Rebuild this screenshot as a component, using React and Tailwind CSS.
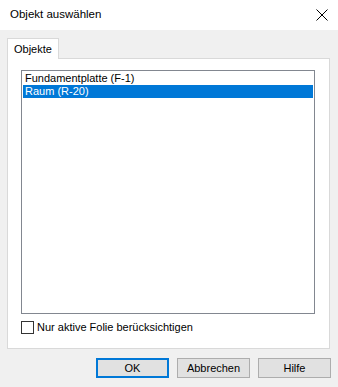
export default function App() {
  const items = [
    { id: 1, label: 'Fundamentplatte (F-1)', selected: false },
    { id: 2, label: 'Raum (R-20)', selected: true },
  ]

  return (
    <div className="w-[338px] h-[387px] flex flex-col bg-[#f0f0f0] text-[11px] text-black" style={{ fontFamily: '"Segoe UI", "Liberation Sans", Arial, sans-serif' }}>
      <div className="h-[30px] bg-white flex items-center justify-between pl-[10px] pr-[9px]">
        <span className="leading-none text-[11.5px]">Objekt auswählen</span>
        <svg width="12" height="12" viewBox="0 0 12 12" className="mr-[1px]">
          <path d="M0.5 0.5 L11.5 11.5 M11.5 0.5 L0.5 11.5" stroke="#000" strokeWidth="1" fill="none" />
        </svg>
      </div>

      <div className="flex-1 flex flex-col px-[7px] pt-[8px]">
        <div className="flex">
          <div className="w-[52px] h-[21px] bg-white border border-b-0 border-[#d9d9d9] flex items-center pl-[6px] relative z-10 -mb-px">
            Objekte
          </div>
        </div>
        <div className="w-[323px] h-[291px] bg-white border border-[#d9d9d9] flex flex-col pl-[13px] pr-[14px] pt-[11px]">
          <div className="h-[244px] border border-[#828790] p-px">
            {items.map(item => (
              <div key={item.id} className={'h-[13px] pl-[2px] flex items-center leading-none ' + (item.selected ? 'bg-[#0078d7] text-white' : '')}>
                {item.label}
              </div>
            ))}
          </div>
          <label className="flex items-center mt-[7px] gap-[3px]">
            <span className="w-[13px] h-[13px] border border-[#333333] bg-white"></span>
            <span className="leading-none">Nur aktive Folie berücksichtigen</span>
          </label>
        </div>

        <div className="flex justify-end gap-[8px] mt-[9px]">
          <button className="w-[73px] h-[20px] bg-[#e1e1e1] border-2 border-[#0078d7] flex items-center justify-center leading-none">OK</button>
          <button className="w-[73px] h-[20px] bg-[#e1e1e1] border border-[#adadad] flex items-center justify-center leading-none">Abbrechen</button>
          <button className="w-[73px] h-[20px] bg-[#e1e1e1] border border-[#adadad] flex items-center justify-center leading-none">Hilfe</button>
        </div>
      </div>
    </div>
  )
}
